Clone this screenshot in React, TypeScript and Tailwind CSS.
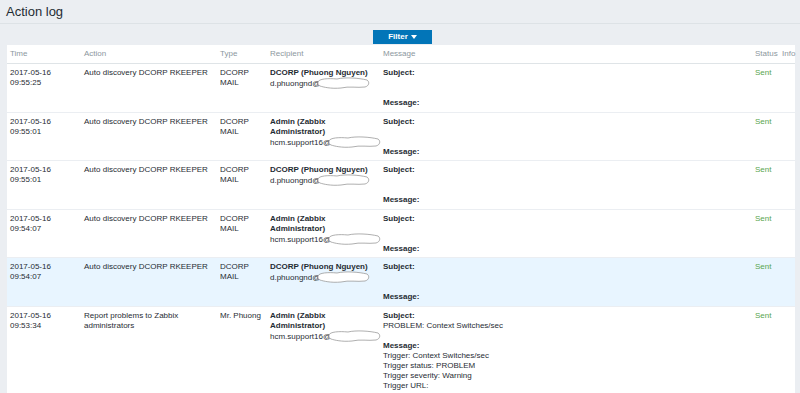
type Entry = {
  time: [string, string]
  action: string[]
  type: string[]
  name: string[]
  email: string
  subject?: string
  message?: string[]
  selected?: boolean
}

const entries: Entry[] = [
  { time: ['2017-05-16', '09:55:25'], action: ['Auto discovery DCORP RKEEPER'], type: ['DCORP', 'MAIL'], name: ['DCORP (Phuong Nguyen)'], email: 'd.phuongnd@' },
  { time: ['2017-05-16', '09:55:01'], action: ['Auto discovery DCORP RKEEPER'], type: ['DCORP', 'MAIL'], name: ['Admin (Zabbix', 'Administrator)'], email: 'hcm.support16@' },
  { time: ['2017-05-16', '09:55:01'], action: ['Auto discovery DCORP RKEEPER'], type: ['DCORP', 'MAIL'], name: ['DCORP (Phuong Nguyen)'], email: 'd.phuongnd@' },
  { time: ['2017-05-16', '09:54:07'], action: ['Auto discovery DCORP RKEEPER'], type: ['DCORP', 'MAIL'], name: ['Admin (Zabbix', 'Administrator)'], email: 'hcm.support16@' },
  { time: ['2017-05-16', '09:54:07'], action: ['Auto discovery DCORP RKEEPER'], type: ['DCORP', 'MAIL'], name: ['DCORP (Phuong Nguyen)'], email: 'd.phuongnd@', selected: true },
  {
    time: ['2017-05-16', '09:53:34'],
    action: ['Report problems to Zabbix', 'administrators'],
    type: ['Mr. Phuong'],
    name: ['Admin (Zabbix', 'Administrator)'],
    email: 'hcm.support16@',
    subject: 'PROBLEM: Context Switches/sec',
    message: ['Trigger: Context Switches/sec', 'Trigger status: PROBLEM', 'Trigger severity: Warning', 'Trigger URL:'],
  },
]

const cols = 'grid grid-cols-[74px_136px_50px_113px_372px_28px_15px]'

// scribbled-out address, drawn over the email
function Blot() {
  return (
    <svg width="56" height="14" viewBox="0 0 56 14" className="inline-block align-middle -ml-[5px] -mt-[2px]">
      <path
        d="M3,7 C2,3 12,2 22,3 C30,1 44,2 52,4 C55,6 54,10 50,11 C42,12 34,10 26,12 C16,13 8,11 5,10 C3,9 3,8 3,7 Z"
        fill="#fff"
        stroke="#9a9a9a"
        strokeWidth="0.8"
      />
    </svg>
  )
}

export default function App() {
  return (
    <div className="h-[393px] w-[800px] overflow-hidden flex flex-col bg-[#ebeef2] font-['Liberation_Sans',Arial,sans-serif] text-[8px] leading-[10px] text-[#1f2c33]">
      <div className="h-[24px] shrink-0 border-b border-[#dde2e6] px-[6px] flex items-center">
        <h1 className="text-[13px] leading-[13px] text-[#1f2c33]">Action log</h1>
      </div>
      <div className="flex justify-center pt-[6px] pb-[1px] pl-[5px]">
        <button className="h-[14px] w-[59px] bg-[#0275b8] text-white text-[8px] font-bold flex items-center justify-center gap-[3px]">
          Filter
          <svg width="6" height="4" viewBox="0 0 6 4">
            <path d="M0,0 L6,0 L3,4 Z" fill="#fff" />
          </svg>
        </button>
      </div>
      <div className="ml-[7px] w-[788px] flex-1 bg-white">
        <div className={`${cols} h-[19px] items-center border-b border-[#dfe4e7] text-[#8c979e]`}>
          <div className="pl-[3px]">Time</div>
          <div className="pl-[3px]">Action</div>
          <div className="pl-[3px]">Type</div>
          <div className="pl-[3px]">Recipient</div>
          <div className="pl-[3px]">Message</div>
          <div className="pl-[3px]">Status</div>
          <div className="pl-[2px]">Info</div>
        </div>
        {entries.map((e, i) => (
          <div key={i} className={`${cols} pt-[4px] pb-[3.6px] border-b border-[#ebeef2] ${e.selected ? 'bg-[#e8f5ff]' : ''}`}>
            <div className="pl-[3px]">
              <div>{e.time[0]}</div>
              <div>{e.time[1]}</div>
            </div>
            <div className="pl-[3px]">
              {e.action.map((a) => (
                <div key={a}>{a}</div>
              ))}
            </div>
            <div className="pl-[3px]">
              {e.type.map((t) => (
                <div key={t} className="whitespace-nowrap">{t}</div>
              ))}
            </div>
            <div className="pl-[3px]">
              {e.name.map((n) => (
                <div key={n} className="font-bold whitespace-nowrap">{n}</div>
              ))}
              <div className="whitespace-nowrap h-[10px]">
                {e.email}
                <Blot />
              </div>
            </div>
            <div className="pl-[3px]">
              <div className="font-bold">Subject:</div>
              <div className="h-[10px]">{e.subject}</div>
              <div className="h-[10px]" />
              <div className="font-bold">Message:</div>
              {e.message?.map((m) => (
                <div key={m}>{m}</div>
              ))}
            </div>
            <div className="pl-[3px] text-[#59a54e]">Sent</div>
            <div />
          </div>
        ))}
      </div>
      <div className="h-[2px] shrink-0 bg-[#3b4652]" />
    </div>
  )
}
